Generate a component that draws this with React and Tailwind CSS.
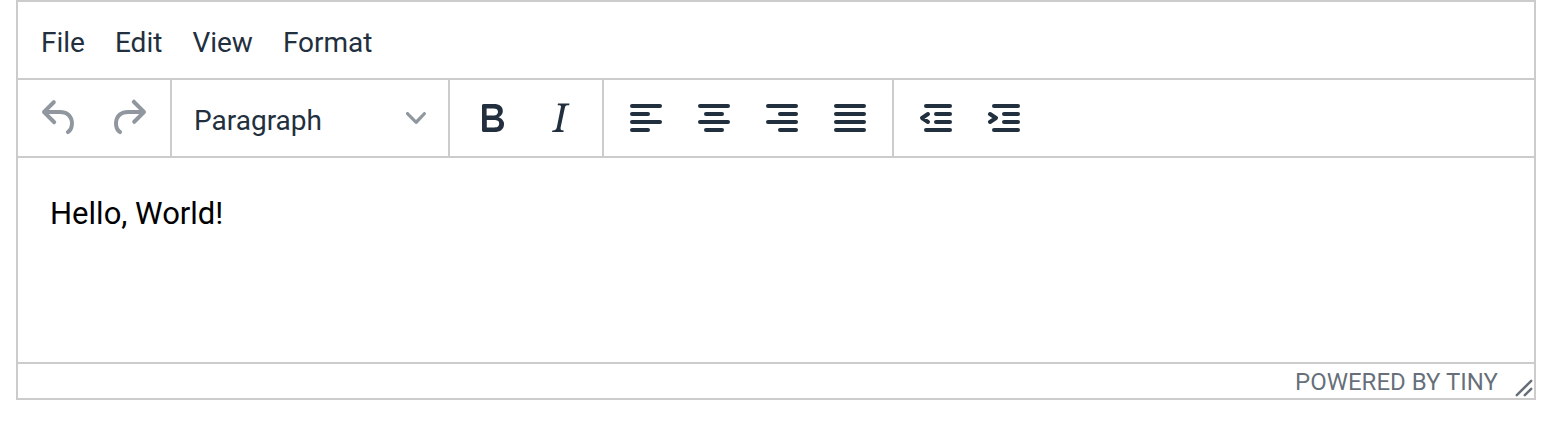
const ICONS = {
  undo: 'M6.4 8H12c3.7 0 6.2 2 6.8 5.1.6 2.7-.4 5.6-2.3 6.8a1 1 0 0 1-1-1.8c1.1-.6 1.8-2.7 1.4-4.6-.5-2.1-2.1-3.5-4.9-3.5H6.4l3.3 3.3a1 1 0 1 1-1.4 1.4l-5-5a1 1 0 0 1 0-1.4l5-5a1 1 0 0 1 1.4 1.4L6.4 8z',
  redo: 'M17.6 10H12c-2.8 0-4.4 1.4-4.9 3.5-.4 2 .3 4 1.4 4.6a1 1 0 1 1-1 1.8c-2-1.2-2.9-4.1-2.3-6.8.6-3 3-5.1 6.8-5.1h5.6l-3.3-3.3a1 1 0 1 1 1.4-1.4l5 5a1 1 0 0 1 0 1.4l-5 5a1 1 0 0 1-1.4-1.4l3.3-3.3z',
  bold: 'M7.8 19c-.3 0-.5 0-.6-.2l-.2-.5V5.7c0-.2 0-.4.2-.5l.6-.2h5c1.5 0 2.7.3 3.5 1 .7.6 1.1 1.4 1.1 2.5a3 3 0 0 1-.6 1.9c-.4.6-1 1-1.6 1.2.4.1.9.3 1.3.6s.8.7 1 1.2c.4.4.5 1 .5 1.6 0 1.3-.4 2.3-1.3 3-.8.7-2.1 1-3.8 1H7.8zm5-8.3c.6 0 1.2-.1 1.6-.5.4-.3.6-.7.6-1.3 0-1.1-.8-1.7-2.3-1.7H9.3v3.5h3.4zm.5 6c.7 0 1.3-.1 1.7-.4.4-.4.6-.9.6-1.5s-.2-1-.7-1.4c-.4-.3-1-.4-2-.4H9.4v3.8h4z',
  italic: 'M16.7 4.7l-.1.9h-.3c-.6 0-1 0-1.4.3-.3.3-.4.6-.5 1.1l-2.1 9.8v.6c0 .5.4.8 1.4.8h.2l-.2.8H8l.2-.8h.2c1.1 0 1.8-.5 2-1.5l2-9.8.1-.5c0-.6-.4-.8-1.4-.8h-.3l.2-.9h5.8z',
};

const LINES = {
  alignLeft: 'M5 6h14M5 10h8M5 14h14M5 18h8',
  alignCenter: 'M5 6h14M8 10h8M5 14h14M8 18h8',
  alignRight: 'M5 6h14M11 10h8M5 14h14M11 18h8',
  justify: 'M5 6h14M5 10h14M5 14h14M5 18h14',
  outdent: 'M7 6h12M12 10h7M12 14h7M7 18h12M8 10L5 12L8 14',
  indent: 'M7 6h12M12 10h7M12 14h7M7 18h12M5 10L8 12L5 14',
};

const GROUPS = [
  [['bold', 'Bold'], ['italic', 'Italic']],
  [['alignLeft', 'Align left'], ['alignCenter', 'Align center'], ['alignRight', 'Align right'], ['justify', 'Justify']],
];

function ToolButton({ icon, label, disabled }) {
  return (
    <button
      type="button"
      aria-label={label}
      disabled={disabled}
      className="flex h-[76px] w-[68px] items-center justify-center text-[#222f3e] disabled:text-[#222f3e]/50"
    >
      {ICONS[icon] ? (
        <svg viewBox="0 0 24 24" className="size-12" fill="currentColor" fillRule="evenodd">
          <path d={ICONS[icon]} />
        </svg>
      ) : (
        <svg viewBox="0 0 24 24" className="size-12" fill="none" stroke="currentColor" strokeWidth="2" strokeLinecap="round" strokeLinejoin="round">
          <path d={LINES[icon]} />
        </svg>
      )}
    </button>
  );
}

function Group({ children }) {
  return <div className="flex border-r-2 border-[#ccc] px-2">{children}</div>;
}

export default function App() {
  return (
    <div className="pl-4 pr-[26px] font-['Roboto',sans-serif] text-[#222f3e]">
      <div className="flex flex-col border-2 border-[#ccc] bg-white">
        <nav aria-label="Menu" className="flex h-[78px] items-center gap-[30px] border-b-2 border-[#ccc] px-[23px] pt-1.5 text-[28px]">
          {['File', 'Edit', 'View', 'Format'].map((name) => (
            <button key={name} type="button">{name}</button>
          ))}
        </nav>

        <div role="toolbar" aria-label="Formatting" className="flex h-[78px] border-b-2 border-[#ccc]">
          <Group>
            <ToolButton icon="undo" label="Undo" disabled />
            <ToolButton icon="redo" label="Redo" disabled />
          </Group>
          <Group>
            <div className="grid h-[76px] w-[260px] items-center">
              <select aria-label="Block format" className="col-start-1 row-start-1 h-full w-full appearance-none bg-transparent px-3.5 pt-1.5 text-[28px]">
                <option>Paragraph</option>
                <option>Heading 1</option>
                <option>Heading 2</option>
              </select>
              <svg viewBox="0 0 10 10" className="pointer-events-none col-start-1 row-start-1 mr-3.5 size-5 justify-self-end text-[#222f3e]/50" fill="currentColor">
                <path d="M8.7 2.2c.3-.3.8-.3 1 0 .4.4.4.9 0 1.2L5.7 7.8c-.3.3-.9.3-1.2 0L.2 3.4a.8.8 0 0 1 0-1.2c.3-.3.8-.3 1.1 0L5 6l3.7-3.8z" />
              </svg>
            </div>
          </Group>
          {GROUPS.map((items) => (
            <Group key={items[0][0]}>
              {items.map(([icon, label]) => (
                <ToolButton key={icon} icon={icon} label={label} />
              ))}
            </Group>
          ))}
          <div className="flex px-2">
            <ToolButton icon="outdent" label="Decrease indent" />
            <ToolButton icon="indent" label="Increase indent" />
          </div>
        </div>

        <textarea
          aria-label="Rich text area"
          defaultValue="Hello, World!"
          className="block h-[204px] w-full resize-none px-8 py-8 text-[31px] leading-[48px] text-black outline-none"
        />

        <footer className="flex h-9 items-center justify-end border-t-2 border-[#ccc] text-[#222f3e]/70">
          <a href="#tiny" className="mr-4 pt-0.5 text-[24px] leading-none">POWERED BY TINY</a>
          <svg viewBox="0 0 10 10" className="size-5 self-end" fill="none" stroke="currentColor" strokeWidth="1.2" strokeLinecap="round">
            <path d="M1.4 8.6L8.6 1.4M5.4 8.6L8.6 5.4" />
          </svg>
        </footer>
      </div>
    </div>
  );
}
